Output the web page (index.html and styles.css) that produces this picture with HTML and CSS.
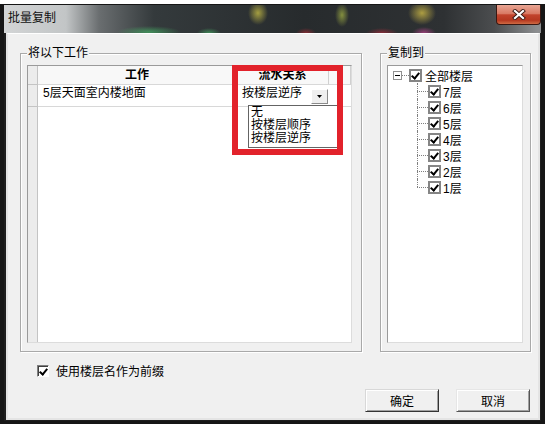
FILE: index.html
```html
<!DOCTYPE html>
<html lang="zh-CN">
<head>
  <meta charset="UTF-8" />
  <title>批量复制</title>
  <link rel="stylesheet" href="styles.css">
</head>
<body>

  <div class="window">
    <div class="titlebar">
      <span class="title">批量复制</span>
      <span class="close">
        <svg width="14" height="11" viewBox="0 0 14 11">
          <path d="M3 2 L11 9 M11 2 L3 9" stroke="#3a1a14" stroke-width="4" stroke-linecap="square"/>
          <path d="M3 2 L11 9 M11 2 L3 9" stroke="#fff" stroke-width="2.2" stroke-linecap="square"/>
        </svg>
      </span>
    </div>

    <div class="frame">
      <div class="client">

        <div class="groups">
          <!-- 将以下工作 -->
          <div class="group group-work">
            <div class="group-title">将以下工作</div>
            <div class="grid">
              <div class="cell rowhead"></div>
              <div class="cell head">工作</div>
              <div class="cell head">流水关系</div>
              <div class="cell head"></div>

              <div class="cell rowhead"></div>
              <div class="cell name">5层天面室内楼地面</div>
              <div class="cell combo">
                <span>按楼层逆序</span>
                <span class="combo-btn">
                  <svg width="5" height="3" viewBox="0 0 5 3"><path d="M0 0h5l-2.5 3z" fill="#000"/></svg>
                </span>
              </div>
              <div class="cell"></div>

              <div class="cell rowhead fill"></div>
              <div class="cell fill wide"></div>

              <ul class="dropdown">
                <li>无</li>
                <li>按楼层顺序</li>
                <li>按楼层逆序</li>
              </ul>
              <div class="highlight"></div>
            </div>
          </div>

          <!-- 复制到 -->
          <div class="group group-target">
            <div class="group-title">复制到</div>
            <div class="tree">
              <div class="node root">
                <span class="expander"></span>
                <span class="link"></span>
                <span class="cb"></span>
                <span class="label">全部楼层</span>
              </div>
              <div class="children">
                <div class="node"><span class="branch"></span><span class="cb"></span><span class="label">7层</span></div>
                <div class="node"><span class="branch"></span><span class="cb"></span><span class="label">6层</span></div>
                <div class="node"><span class="branch"></span><span class="cb"></span><span class="label">5层</span></div>
                <div class="node"><span class="branch"></span><span class="cb"></span><span class="label">4层</span></div>
                <div class="node"><span class="branch"></span><span class="cb"></span><span class="label">3层</span></div>
                <div class="node"><span class="branch"></span><span class="cb"></span><span class="label">2层</span></div>
                <div class="node last"><span class="branch"></span><span class="cb"></span><span class="label">1层</span></div>
              </div>
            </div>
          </div>
        </div>

        <div class="prefix">
          <span class="cb small"></span>
          <span>使用楼层名作为前缀</span>
        </div>

        <div class="actions">
          <button class="btn default">确定</button>
          <button class="btn">取消</button>
        </div>

      </div>
    </div>
  </div>

</body>
</html>
```

FILE: styles.css
```css
body {
  margin: 0;
  background: #fff;
  font-family: "Liberation Sans", "Noto Sans CJK SC", sans-serif;
  font-size: 12px;
  color: #000;
}

.window {
  width: 545px;
  height: 420px;
  margin-top: 4px;
  padding: 1px 4px 3px 4px;
  box-sizing: border-box;
  background: #161616;
}

/* title bar, glass over a dark background */
.titlebar {
  height: 28px;
  display: flex;
  justify-content: space-between;
  align-items: flex-start;
  background:
    radial-gradient(ellipse 10px 12px at 254px 8px, rgba(205, 195, 70, 0.75), transparent),
    radial-gradient(ellipse 7px 12px at 338px 10px, rgba(170, 185, 70, 0.7), transparent),
    radial-gradient(ellipse 14px 12px at 418px 8px, rgba(205, 185, 70, 0.8), transparent),
    radial-gradient(ellipse 32px 6px at 145px 27px, rgba(70, 170, 100, 0.75), transparent),
    radial-gradient(ellipse 12px 5px at 205px 28px, rgba(70, 170, 100, 0.7), transparent),
    radial-gradient(ellipse 10px 5px at 302px 28px, rgba(170, 45, 55, 0.7), transparent),
    radial-gradient(ellipse 16px 5px at 378px 28px, rgba(170, 45, 60, 0.7), transparent),
    radial-gradient(ellipse 12px 6px at 420px 28px, rgba(195, 70, 150, 0.7), transparent),
    linear-gradient(to right, #d3d5d6 0, #c2c5c6 62px, #6a6e70 95px, #343a3c 150px, #272b2d 300px, #2e3133 440px, #4b4d4f 490px, #8c8e90 533px);
}

.title {
  padding: 5px 0 0 4px;
  line-height: 16px;
  color: #111;
}

.close {
  width: 45px;
  height: 20px;
  box-sizing: border-box;
  display: flex;
  align-items: center;
  justify-content: center;
  border: 1px solid #3a1812;
  border-top: none;
  border-radius: 0 0 4px 4px;
  background: linear-gradient(#e9a694 0%, #d97a64 45%, #c2432c 52%, #b53820 80%, #cf6a44 100%);
}

.frame {
  padding: 0 1px 1px 2px;
  background: #1e1e1e;
}

.client {
  width: 530px;
  height: 384px;
  border: 2px solid #e4e4e4;
  border-top: 1px solid #fff;
  background: #f0f0f0;
  display: flex;
  flex-direction: column;
}

.groups {
  display: flex;
  gap: 18px;
  padding: 19px 7px 0 12px;
}

.group {
  height: 299px;
  box-sizing: border-box;
  border: 1px solid #a9a9a9;
  box-shadow: inset 1px 1px 0 #fff, 1px 1px 0 #fff;
  display: flex;
  flex-direction: column;
}

.group-work {
  width: 342px;
  padding: 0 9px 8px 6px;
}

.group-target {
  width: 151px;
  padding: 0 7px 8px 6px;
}

.group-title {
  margin: -8px 0 0 0;
  padding: 0 1px;
  width: fit-content;
  line-height: 14px;
  background: #f0f0f0;
}

/* work grid */
.grid {
  position: relative;
  flex: 1;
  margin-top: 5px;
  display: grid;
  grid-template-columns: 10px 199px 92px 1fr;
  grid-template-rows: 19px 22px 1fr;
  border: 1px solid;
  border-color: #9a9a9a #dcdcdc #dcdcdc #9a9a9a;
  background: #fff;
}

.cell {
  box-sizing: border-box;
  border-bottom: 1px solid #d8d8d8;
}

.rowhead {
  background: #ececec;
  border-right: 1px solid #c4c4c4;
  border-bottom-color: #c4c4c4;
}

.head {
  background: #f8f8f8;
  border-right: 1px solid #d0d0d0;
  font-weight: bold;
  text-align: center;
  line-height: 18px;
}

.name {
  padding: 1px 0 0 5px;
  line-height: 14px;
}

.combo {
  display: flex;
  justify-content: space-between;
  align-items: flex-start;
  padding: 1px 1px 0 5px;
  line-height: 14px;
}

.combo-btn {
  margin-top: 3px;
  width: 17px;
  height: 15px;
  box-sizing: border-box;
  display: flex;
  align-items: center;
  justify-content: center;
  background: #efefef;
  border: 1px solid;
  border-color: #fff #8a8a8a #8a8a8a #fff;
}

.fill {
  border-bottom: none;
}

.wide {
  grid-column: 2 / 5;
}

.dropdown {
  position: absolute;
  left: 220px;
  top: 39px;
  width: 90px;
  height: 43px;
  box-sizing: border-box;
  margin: 0;
  padding: 0 0 0 2px;
  list-style: none;
  background: #fff;
  border: 1px solid #646464;
  line-height: 13px;
  z-index: 2;
}

.highlight {
  position: absolute;
  left: 204px;
  top: -1px;
  width: 111px;
  height: 90px;
  box-sizing: border-box;
  border: 6px solid #e2222b;
  z-index: 3;
}

/* floor tree */
.tree {
  flex: 1;
  margin-top: 5px;
  padding-top: 1px;
  border: 1px solid;
  border-color: #9a9a9a #dcdcdc #dcdcdc #9a9a9a;
  background: #fff;
}

.node {
  display: flex;
  align-items: center;
  height: 16px;
}

.root {
  padding-left: 5px;
}

.expander {
  position: relative;
  width: 9px;
  height: 9px;
  box-sizing: border-box;
  border: 1px solid #919191;
  background: #fff;
}

.expander::after {
  content: '';
  position: absolute;
  left: 1px;
  top: 3px;
  width: 5px;
  height: 1px;
  background: #000;
}

.link {
  width: 7px;
  border-top: 1px dotted #808080;
}

.cb {
  width: 13px;
  height: 13px;
  box-sizing: border-box;
  border: 2px solid #858585;
  background: #fff;
  display: flex;
  justify-content: center;
}

.cb::after {
  content: '';
  width: 3px;
  height: 6px;
  margin-top: 0;
  border: solid #000;
  border-width: 0 2px 2px 0;
  transform: rotate(40deg);
}

.label {
  margin-left: 3px;
}

.children {
  padding-left: 29px;
}

.children .label {
  margin-left: 2px;
}

.branch {
  position: relative;
  width: 11px;
  height: 16px;
}

.branch::before {
  content: '';
  position: absolute;
  left: 0;
  top: 0;
  height: 16px;
  border-left: 1px dotted #808080;
}

.last .branch::before {
  height: 8px;
}

.branch::after {
  content: '';
  position: absolute;
  left: 0;
  top: 8px;
  width: 11px;
  border-top: 1px dotted #808080;
}

/* bottom */
.prefix {
  display: flex;
  align-items: center;
  gap: 7px;
  height: 13px;
  margin-top: 12px;
  padding-left: 29px;
}

.cb.small {
  width: 12px;
  height: 12px;
  border: 1px solid;
  border-color: #808080 #fff #fff #808080;
  box-shadow: inset 1px 1px 0 #404040;
}

.cb.small::after {
  margin-top: 1px;
}

.actions {
  display: flex;
  justify-content: flex-end;
  gap: 17px;
  margin-top: 12px;
  padding-right: 8px;
}

.btn {
  width: 74px;
  height: 23px;
  padding: 0;
  font: inherit;
  color: #000;
  background: #f0f0f0;
  border: 1px solid;
  border-color: #e6e6e6 #555 #555 #e6e6e6;
  box-shadow: inset 1px 1px 0 #fff, inset -1px -1px 0 #a0a0a0;
}

.btn.default {
  border-color: #d8d8d8 #333 #333 #d8d8d8;
}
```
